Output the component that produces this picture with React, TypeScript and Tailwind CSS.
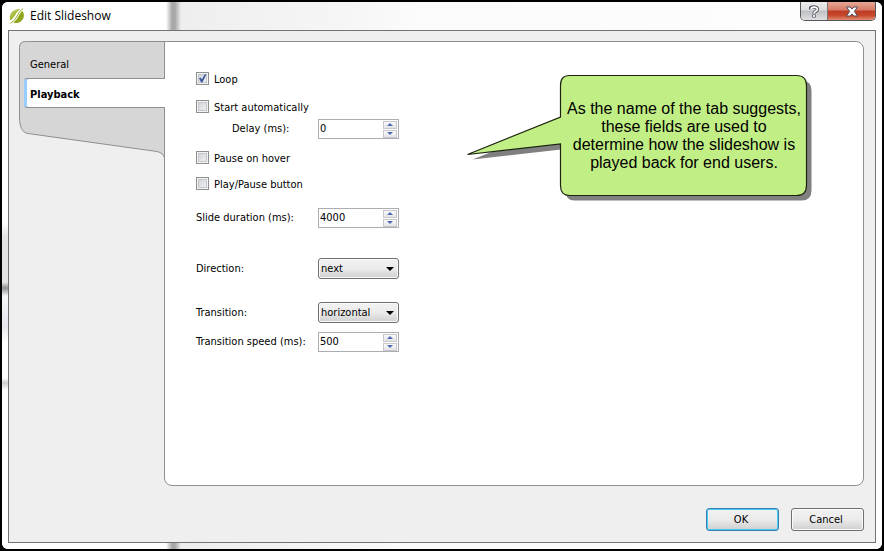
import { useState } from "react";
import type { ReactNode } from "react";

const FACE = "bg-linear-to-b from-[#f2f2f2] via-[#ebebeb] via-50% to-[#cfcfcf]";

function CheckRow({ label, checked, onChange }: { label: string; checked: boolean; onChange: (v: boolean) => void }) {
  return (
    <label className="flex h-5 items-start gap-[5px]">
      <span className="relative mt-[3px] flex size-[13px]">
        <input
          type="checkbox"
          checked={checked}
          onChange={(e) => onChange(e.target.checked)}
          className="peer size-[13px] appearance-none border border-[#8e8f8f] bg-linear-to-br from-[#cbcfd5] to-[#f6f6f6] shadow-[inset_0_0_0_1px_#f4f4f4,inset_0_0_0_2px_#c3c6ca]"
        />
        <svg viewBox="0 0 13 13" className="pointer-events-none absolute inset-0 hidden size-[13px] peer-checked:block" aria-hidden="true">
          <path d="M3 6.2 L4.6 5.4 L5.7 7.4 L9 2 L10.3 2.6 L6.3 10.4 L5.2 10.4 Z" fill="#3b559c" />
        </svg>
      </span>
      <span className="leading-[22px]">{label}</span>
    </label>
  );
}

function FieldRow({ id, label, indent, children }: { id: string; label: string; indent?: boolean; children: ReactNode }) {
  return (
    <div className="flex items-center">
      <label htmlFor={id} className={indent ? "w-[122px] pl-9" : "w-[122px]"}>
        {label}
      </label>
      {children}
    </div>
  );
}

function Spinner({ id, initial, name }: { id: string; initial: number; name: string }) {
  const [value, setValue] = useState(initial);
  const step = "flex h-2 w-3.5 items-center justify-center border border-[#c6c8cc] bg-linear-to-b from-[#fafafa] to-[#e4e4e8]";
  return (
    <div className="flex h-5 w-[81px] items-center border border-[#abadb3] bg-white pr-px">
      <input
        id={id}
        type="number"
        value={value}
        onChange={(e) => setValue(Number(e.target.value))}
        className="h-4 min-w-0 flex-1 appearance-none pl-px leading-4 outline-none [appearance:textfield] [&::-webkit-inner-spin-button]:appearance-none"
      />
      <div className="flex flex-col gap-px">
        <button type="button" aria-label={`Increase ${name}`} onClick={() => setValue(value + 1)} className={step}>
          <svg width="6" height="3" viewBox="0 0 6 3" aria-hidden="true">
            <path d="M3 0 L6 3 H0 Z" fill="#4f68b4" />
          </svg>
        </button>
        <button type="button" aria-label={`Decrease ${name}`} onClick={() => setValue(value - 1)} className={step}>
          <svg width="6" height="3" viewBox="0 0 6 3" aria-hidden="true">
            <path d="M0 0 H6 L3 3 Z" fill="#4f68b4" />
          </svg>
        </button>
      </div>
    </div>
  );
}

function Picker({ id, options }: { id: string; options: string[] }) {
  return (
    <div className="relative">
      <select
        id={id}
        className={`block h-[21px] w-[81px] appearance-none rounded-[3px] border border-[#707070] pl-[2px] shadow-[inset_0_0_0_1px_#fafafa] ${FACE}`}
      >
        {options.map((o) => (
          <option key={o}>{o}</option>
        ))}
      </select>
      <svg width="8" height="4" viewBox="0 0 8 4" className="pointer-events-none absolute top-[9px] right-[5px]" aria-hidden="true">
        <path d="M0 0 H8 L4 4 Z" fill="#000" />
      </svg>
    </div>
  );
}

function Logo() {
  return (
    <svg width="16" height="16" viewBox="0 0 16 16" aria-hidden="true">
      <path d="M1.4 12.4 C-0.6 6.5 3.5 1 11.4 1 C9.2 2.4 7.8 4.2 6.2 6.8 C4.8 9.2 3.4 11.4 1.4 12.4 Z" fill="#a3b935" />
      <path d="M1.6 15.4 C5.6 12.6 7.2 9.8 8.8 6.8 C10 4.4 11.6 2.2 14.2 0.6" fill="none" stroke="#94ab2a" strokeWidth="1" />
      <path d="M13.6 3 C16.6 7.4 14.4 14.6 7.4 15 C6.2 15.1 5 15 4.2 14.6 C7 12.8 8.4 10.6 9.8 7.8 C10.9 5.6 12 4 13.6 3 Z" fill="#8ea619" />
      <path d="M2.6 7.6 C3.4 5 5 3.4 7.6 2.6" fill="none" stroke="#c6d56c" strokeWidth="1" />
    </svg>
  );
}

function TitleBar() {
  return (
    <header className="flex h-7 items-start justify-between rounded-t-md bg-[linear-gradient(90deg,#fff_0,#fff_164px,#a8a8a8_170px,#a8a8a8_173px,#eee_179px,#f2f2f2_260px,#f6f6f6_350px,#fbfbfb_410px,#fdfdfd_100%)] pr-[6px] pl-[7px]">
      <h1 className="flex h-[27px] items-center gap-[5px] font-['Open_Sans','Noto_Sans',sans-serif] text-[12px]">
        <Logo />
        Edit Slideshow
      </h1>
      <div className="flex h-[19px] overflow-hidden rounded-b-[5px] border border-t-0 border-[#55565a]">
        <button
          type="button"
          aria-label="Help"
          className="flex w-[27px] items-center justify-center border-r border-[#77787c] bg-[linear-gradient(180deg,#ececec_0,#dcdcdc_45%,#bdbfc2_50%,#e0e0e2_100%)]"
        >
          <svg width="10" height="13" viewBox="0 0 10 13" aria-hidden="true">
            <path d="M1 4.4 C1 1.4 8.4 1.2 8.4 4.2 C8.4 6.4 5 6 5 8.6 M5 9.6 V12.6" fill="none" stroke="#4b4e59" strokeWidth="3.4" />
            <path d="M2 4.4 C2 1.6 8.4 1.4 8.4 4.2 C8.4 6.4 5 6 5 8.4 M5 10 V12" fill="none" stroke="#fff" strokeWidth="1.7" />
          </svg>
        </button>
        <button
          type="button"
          aria-label="Close"
          className="flex w-[47px] items-center justify-center bg-[linear-gradient(180deg,#e9a797_0,#d77a66_45%,#bc3b22_50%,#c8492c_75%,#e08d70_100%)]"
        >
          <svg width="12" height="11" viewBox="0 0 12 11" aria-hidden="true">
            <path
              d="M0.5 1 H4.2 L6 3 L7.8 1 H11.5 L8.4 5.4 L11.5 10 H7.8 L6 7.9 L4.2 10 H0.5 L3.6 5.4 Z"
              fill="#fff"
              stroke="#4f4a55"
              strokeWidth="1"
            />
          </svg>
        </button>
      </div>
    </header>
  );
}

function Sidebar() {
  return (
    <nav className="relative z-10 -mr-px w-[146px] shrink-0">
      <svg width="146" height="118" viewBox="0 0 146 118" className="absolute top-0 left-0" aria-hidden="true">
        <path
          d="M145.5 0.5 H6.5 Q0.5 0.5 0.5 6.5 V76 C0.5 86 3 91.5 9 92.5 L138 110.5 Q144.5 112 145.5 117 Z"
          fill="#d6d6d6"
          stroke="#8e8f8f"
          strokeWidth="1"
        />
      </svg>
      <ul className="relative pt-2 pl-[5px]">
        <li>
          <a href="#general" className="flex h-[29px] items-center pt-[2px] pl-[6px]">
            General
          </a>
        </li>
        <li>
          <a
            href="#playback"
            aria-current="page"
            className="flex h-[30px] items-center rounded-l-[3px] border-y border-[#8e8f8f] bg-white pt-[3px] pl-[6px] font-bold shadow-[inset_3px_0_0_#99ccff]"
          >
            Playback
          </a>
        </li>
      </ul>
    </nav>
  );
}

function Callout() {
  const shape =
    "M102.5 1.5 H329.5 Q339.5 1.5 339.5 11.5 V111.5 Q339.5 121.5 329.5 121.5 H102.5 Q93.5 121.5 93.5 111.5 V70 L0.5 80.5 L93.5 43 V11.5 Q93.5 1.5 102.5 1.5 Z";
  return (
    <aside className="absolute top-8 left-[302px] h-[128px] w-[346px]">
      <svg width="346" height="128" viewBox="0 0 346 128" className="absolute inset-0" aria-hidden="true">
        <path d={shape} transform="translate(5 5)" fill="#808080" />
        <path d={shape} fill="#c2ef85" stroke="#1c2410" strokeWidth="1.2" />
      </svg>
      <p className="relative ml-[94px] flex h-[123px] w-[246px] items-center justify-center text-center font-['Liberation_Sans',Arial,sans-serif] text-[16px] leading-[18px]">
        <span>
          As the name of the tab suggests,
          <br />
          these fields are used to
          <br />
          determine how the slideshow is
          <br />
          played back for end users.
        </span>
      </p>
    </aside>
  );
}

function PlaybackForm() {
  const [loop, setLoop] = useState(true);
  const [auto, setAuto] = useState(false);
  const [pause, setPause] = useState(false);
  const [button, setButton] = useState(false);
  return (
    <div className="flex flex-col pt-[27px] pb-8 pl-[31px]">
      <CheckRow label="Loop" checked={loop} onChange={setLoop} />
      <div className="mt-2 flex flex-col gap-[2px]">
        <CheckRow label="Start automatically" checked={auto} onChange={setAuto} />
        <FieldRow id="delay" label="Delay (ms):" indent>
          <Spinner id="delay" initial={0} name="delay" />
        </FieldRow>
      </div>
      <div className="mt-[9px] flex flex-col gap-[6px]">
        <CheckRow label="Pause on hover" checked={pause} onChange={setPause} />
        <CheckRow label="Play/Pause button" checked={button} onChange={setButton} />
      </div>
      <div className="mt-[14px]">
        <FieldRow id="duration" label="Slide duration (ms):">
          <Spinner id="duration" initial={4000} name="slide duration" />
        </FieldRow>
      </div>
      <div className="mt-[30px]">
        <FieldRow id="direction" label="Direction:">
          <Picker id="direction" options={["next", "prev"]} />
        </FieldRow>
      </div>
      <div className="mt-[23px] flex flex-col gap-[9px]">
        <FieldRow id="transition" label="Transition:">
          <Picker id="transition" options={["horizontal", "vertical", "fade"]} />
        </FieldRow>
        <FieldRow id="speed" label="Transition speed (ms):">
          <Spinner id="speed" initial={500} name="transition speed" />
        </FieldRow>
      </div>
    </div>
  );
}

export default function App() {
  return (
    <div className="flex min-h-screen flex-col bg-black p-[2px] font-['DejaVu_Sans_Condensed','DejaVu_Sans',Tahoma,sans-serif] text-[11px] leading-4 text-black">
      <div className="flex flex-1 flex-col rounded-md bg-white bg-[linear-gradient(180deg,#fff_220px,#e4e4e4_235px,#e4e4e4_280px,#909090_286px,#f4f8fb_294px,#e6e6ec_325px,#fff_340px,#fff_376px,#cfcfcf_381px,#fff_388px)] bg-no-repeat [background-size:6px_100%]">
        <TitleBar />
        <main className="mx-[6px] flex flex-1 flex-col border border-[#737373] bg-[#efefef] pt-[10px] pr-[11px] pb-[11px] pl-[10px]">
          <div className="flex flex-1">
            <Sidebar />
            <section className="relative flex-1 rounded-r-lg rounded-bl-lg border border-[#8e8f8f] bg-white">
              <PlaybackForm />
              <Callout />
            </section>
          </div>
          <footer className="flex justify-end gap-3 pt-[22px]">
            <button type="button" className={`h-[23px] w-[73px] rounded-[3px] border border-[#3c7fb1] pr-[3px] shadow-[inset_0_0_0_1px_#46cbf2] ${FACE}`}>
              OK
            </button>
            <button type="button" className={`h-[23px] w-[73px] rounded-[3px] border border-[#707070] pr-[3px] shadow-[inset_0_0_0_1px_#fafafa] ${FACE}`}>
              Cancel
            </button>
          </footer>
        </main>
        <div className="h-[6px] rounded-b-md bg-[linear-gradient(90deg,#fff_0,#fff_164px,#a8a8a8_170px,#a8a8a8_173px,#eee_179px,#f2f2f2_260px,#fbfbfb_410px,#fdfdfd_100%)]" />
      </div>
    </div>
  );
}
